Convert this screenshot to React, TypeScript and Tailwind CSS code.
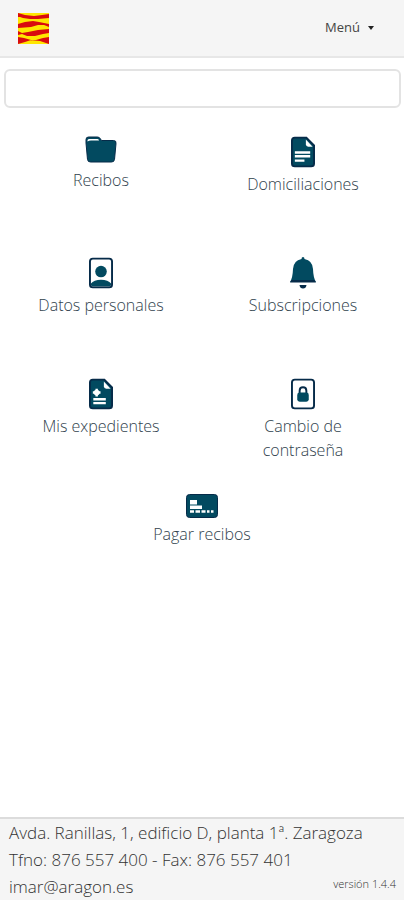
import type { ReactNode } from "react";

const TILES: { label: string; icon: ReactNode }[] = [
  { label: "Recibos", icon: <FolderIcon /> },
  { label: "Domiciliaciones", icon: <DocumentIcon /> },
  { label: "Datos personales", icon: <ProfileIcon /> },
  { label: "Subscripciones", icon: <BellIcon /> },
  { label: "Mis expedientes", icon: <MedicalFileIcon /> },
  { label: "Cambio de contraseña", icon: <LockFileIcon /> },
];

function FlagLogo() {
  return (
    <svg viewBox="0 0 31 31" className="size-[31px]" aria-hidden="true">
      <rect width="31" height="31" fill="#ffe600" />
      <g fill="#d90a0f">
        <path d="M0 0 7 2 16 3 24 2 31 1V5L20 6 12 6 5 5 2 4 0 4Z" />
        <path d="M0 11 7 9 15 8 21 9 31 11V14L26 12 20 12 13 14 0 15Z" />
        <path d="M0 18 4 20 10 19 20 17 31 16V20L25 21 17 23 9 23 4 21 0 22Z" />
        <path d="M0 24 6 25 13 27 7 29 0 31ZM31 24 25 25 18 27 12 27 22 28 31 31Z" />
      </g>
    </svg>
  );
}

function FolderIcon() {
  return (
    <svg viewBox="0 0 32 28" className="h-7 w-8" aria-hidden="true">
      <path
        d="M3.500 1h9q2 0 3 2l1 1.500h12q3 0 2.500 3l-1.500 16q-.3 2.500-3 2.500h-21q-2.700 0-3-2.500L1 7V3.500Q1 1 3.500 1Z"
        fill="#024a60"
        stroke="#062b49"
        strokeWidth="1"
      />
      <path d="M2.500 4.500q0-1.500 1.500-1.500h8.500q1.500 0 1.500 1.500H6q-2 0-3.500 1Z" fill="#fff" />
    </svg>
  );
}

function SheetShape() {
  return (
    <>
      <path
        d="M4 1h12l8 8v19q0 3-3 3H4q-3 0-3-3V4q0-3 3-3Z"
        fill="#024a60"
        stroke="#062b49"
        strokeWidth="2"
      />
      <path d="M15.500 3v5q0 2.500 2.500 2.500h4.500Z" fill="#fff" />
    </>
  );
}

function DocumentIcon() {
  return (
    <svg viewBox="0 0 25 32" className="h-8 w-6" aria-hidden="true">
      <SheetShape />
      <path d="M4 16.500h16M4 20.500h16M4 25h10" stroke="#fff" strokeWidth="2.500" />
    </svg>
  );
}

function MedicalFileIcon() {
  return (
    <svg viewBox="0 0 25 32" className="h-8 w-6" aria-hidden="true">
      <SheetShape />
      <circle cx="8" cy="14.500" r="3" fill="#fff" />
      <path d="M4 14.500h8M8 10.500v8" stroke="#fff" strokeWidth="2.500" />
      <path d="M4.500 21.500h13M4.500 25.500h13" stroke="#fff" strokeWidth="2.500" />
    </svg>
  );
}

function ProfileIcon() {
  return (
    <svg viewBox="0 0 25 32" className="h-8 w-6" aria-hidden="true">
      <path d="M2 28v-1q3-4 10.500-4T23 27v1q0 2-2 2H4q-2 0-2-2Z" fill="#024a60" />
      <circle cx="12.500" cy="14.500" r="6" fill="#024a60" />
      <rect x="1" y="1" width="23" height="30" rx="3" fill="none" stroke="#062b49" strokeWidth="2" />
    </svg>
  );
}

function LockFileIcon() {
  return (
    <svg viewBox="0 0 25 32" className="h-8 w-6" aria-hidden="true">
      <rect x="1" y="1" width="23" height="30" rx="3" fill="none" stroke="#062b49" strokeWidth="2" />
      <path d="M9 15v-2.500q0-3.500 3.500-3.500t3.500 3.500V15" fill="none" stroke="#062b49" strokeWidth="2" />
      <rect x="6.500" y="14.500" width="12" height="9.500" rx="2.500" fill="#024a60" />
    </svg>
  );
}

function BellIcon() {
  return (
    <svg viewBox="0 0 26 32" className="h-8 w-7" aria-hidden="true">
      <path
        d="M13 0q1.500 0 1.500 2Q22.500 3.500 23 12q.3 9 3 13H0q2.700-4 3-13Q3.500 3.500 11.500 2 11.500 0 13 0Z"
        fill="#024a60"
      />
      <path d="M0 25.500 1.500 23h23L26 25.500Z" fill="#062b49" />
      <path d="M9.500 28h7q-.5 3.500-3.500 3.500T9.500 28Z" fill="#062b49" />
    </svg>
  );
}

function CardIcon() {
  return (
    <svg viewBox="0 0 32 24" className="h-6 w-8" aria-hidden="true">
      <rect x=".5" y=".5" width="31" height="23" rx="3" fill="#024a60" stroke="#062b49" />
      <path d="M4 6h7v4.500H4ZM4 11.500h12V15H4Z" fill="#fff" />
      <path d="M4 17.500h4M9.500 17.500H14M15.500 17.500h4M21 17.500h2.500M25 17.500h2.500" stroke="#fff" strokeWidth="2.500" />
    </svg>
  );
}

function Tile({ label, icon }: { label: string; icon: ReactNode }) {
  return (
    <a href="#" className="flex flex-col items-center gap-1 px-8 text-center">
      {icon}
      <span>{label}</span>
    </a>
  );
}

export default function App() {
  return (
    <div className="flex min-h-screen flex-col bg-white font-['Open_Sans',sans-serif] text-base font-light text-[#30424d]">
      <header className="flex h-[58px] items-center justify-between border-b-2 border-[#e7e7e7] bg-[#f5f5f5] pr-[30px] pl-[18px]">
        <a href="#" aria-label="Inicio">
          <FlagLogo />
        </a>
        <button type="button" className="flex items-center gap-2 text-[13px] font-normal text-[#444]">
          Menú
          <svg viewBox="0 0 6 4" className="h-1 w-1.5" aria-hidden="true">
            <path d="M0 0h6L3 4Z" fill="#222" />
          </svg>
        </button>
      </header>

      <main className="flex-1">
        <div className="pt-[11px] pr-[3px] pl-1">
          <input
            type="text"
            aria-label="Buscar"
            className="block h-[39px] w-full rounded-md border-2 border-[#e3e3e3] bg-white px-3 outline-none"
          />
        </div>
        <nav className="pt-7">
          <div className="grid grid-cols-2 grid-rows-[121px_121px_116px]">
            {TILES.map((tile) => (
              <Tile key={tile.label} {...tile} />
            ))}
          </div>
          <Tile label="Pagar recibos" icon={<CardIcon />} />
        </nav>
      </main>

      <footer className="flex items-end justify-between border-t-2 border-[#dcdcdc] bg-[#f5f5f5] pr-2 pl-[9px] text-[#333]">
        <address className="text-[17px] leading-[27px] not-italic">
          <p className="whitespace-nowrap">Avda. Ranillas, 1, edificio D, planta 1ª. Zaragoza</p>
          <p>Tfno: 876 557 400 - Fax: 876 557 401</p>
          <a href="mailto:imar@aragon.es">imar@aragon.es</a>
        </address>
        <p className="-ml-20 pb-2 text-[11px] whitespace-nowrap">versión 1.4.4</p>
      </footer>
    </div>
  );
}
